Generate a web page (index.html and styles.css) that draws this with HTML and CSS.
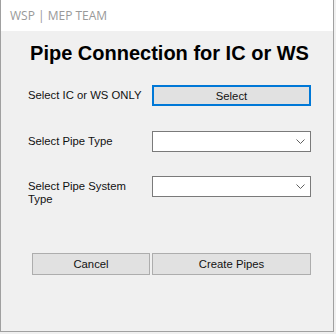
FILE: index.html
```html
<!DOCTYPE html>
<html lang="en">
<head>
  <meta charset="UTF-8" />
  <title>WSP | MEP TEAM</title>
  <link rel="stylesheet" href="styles.css">
</head>
<body>

  <div class="window">
    <div class="title-bar">WSP | MEP TEAM</div>

    <div class="content">
      <h1>Pipe Connection for IC or WS</h1>

      <div class="form-row first">
        <label>Select IC or WS ONLY</label>
        <button class="btn btn-focus">Select</button>
      </div>

      <div class="form-row second">
        <label>Select Pipe Type</label>
        <div class="combo"><span class="chevron"><svg width="9" height="5" viewBox="0 0 9 5"><path d="M0.5 0.5 L4.5 4.5 L8.5 0.5" fill="none" stroke="#606060" stroke-width="1"/></svg></span></div>
      </div>

      <div class="form-row">
        <label>Select Pipe System<br>Type</label>
        <div class="combo"><span class="chevron"><svg width="9" height="5" viewBox="0 0 9 5"><path d="M0.5 0.5 L4.5 4.5 L8.5 0.5" fill="none" stroke="#606060" stroke-width="1"/></svg></span></div>
      </div>

      <div class="button-row">
        <button class="btn btn-cancel">Cancel</button>
        <button class="btn btn-create">Create Pipes</button>
      </div>
    </div>
  </div>

</body>
</html>
```

FILE: styles.css
```css
body {
  margin: 0;
  background-color: #f0f0f0;
  font-family: "Liberation Sans", Arial, sans-serif;
}

.window {
  width: 332px;
  height: 331px;
  border: 1px solid #a0a0a0;
  border-top: none;
  background-color: #f0f0f0;
}

.title-bar {
  height: 31px;
  line-height: 31px;
  padding-left: 9px;
  background-color: white;
  color: #999999;
  font-family: "Open Sans", sans-serif;
  font-size: 12px;
}

.content {
  padding: 0 22px 0 27px;
}

h1 {
  margin: 7px -20px 0 -20px;
  height: 30px;
  line-height: 30px;
  text-align: center;
  white-space: nowrap;
  font-size: 20px;
  font-weight: bold;
  color: black;
}

.form-row {
  display: flex;
  align-items: flex-start;
  margin-top: 24px;
  font-size: 11.3px;
  color: #111111;
}

.form-row.first {
  margin-top: 17px;
}

.form-row.second {
  margin-top: 25px;
}

.form-row label {
  width: 124px;
  padding-top: 4px;
  line-height: 13px;
}

.btn {
  background-color: #e1e1e1;
  border: 1px solid #adadad;
  font-family: "Liberation Sans", Arial, sans-serif;
  font-size: 11.3px;
  color: #111111;
  padding: 0;
  height: 22px;
}

.btn-focus {
  width: 159px;
  height: 21px;
  border: 2px solid #0078d7;
}

.combo {
  position: relative;
  width: 158px;
  height: 19px;
  border: 1px solid #7a7a7a;
  background-color: white;
}

.chevron {
  position: absolute;
  right: 5px;
  top: 7px;
  line-height: 0;
}

.button-row {
  display: flex;
  gap: 2px;
  margin-top: 47px;
  margin-left: 4px;
}

.btn-cancel {
  width: 118px;
}

.btn-create {
  width: 159px;
}
```
